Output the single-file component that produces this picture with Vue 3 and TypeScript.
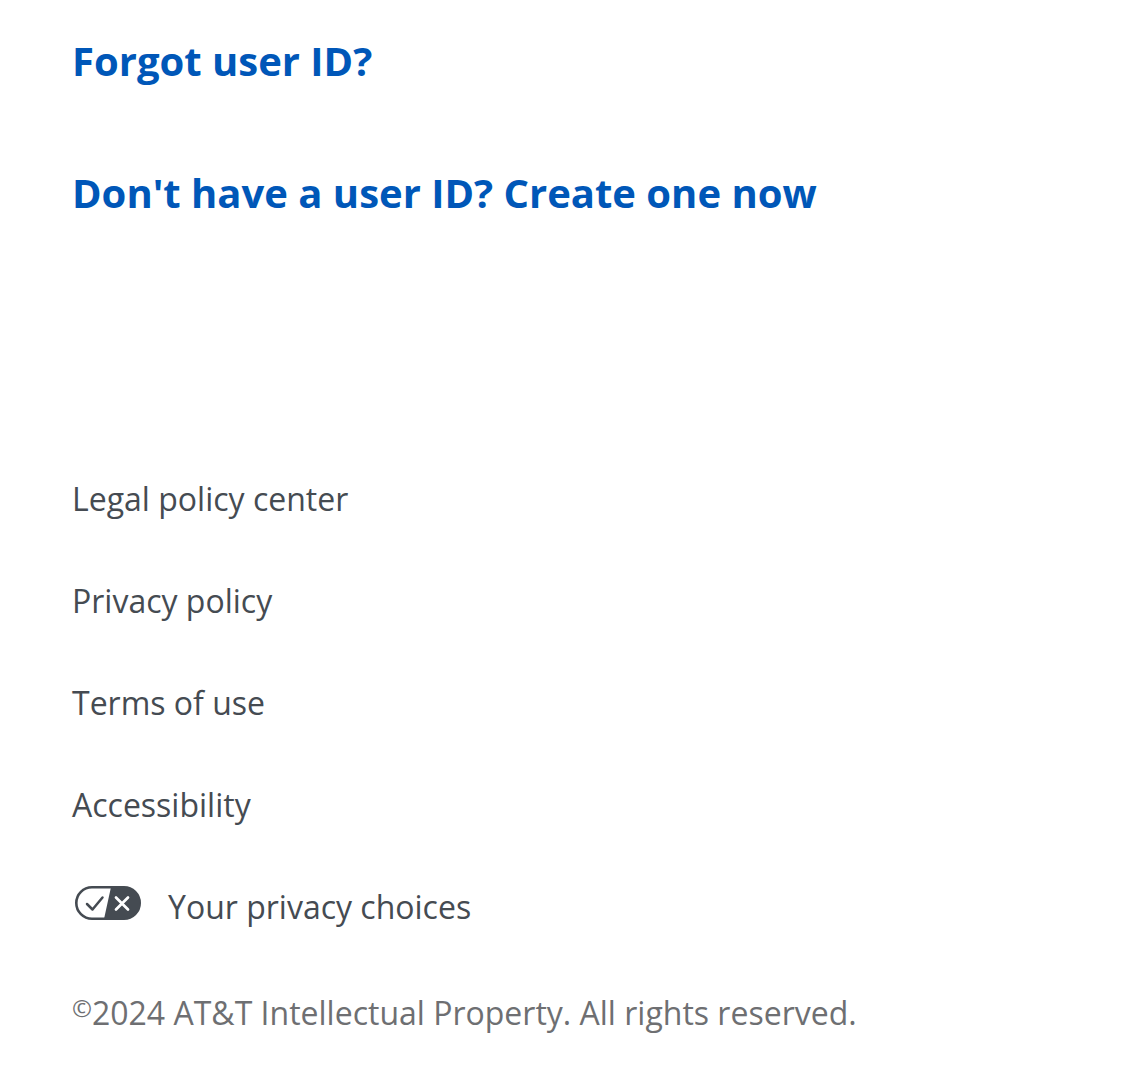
<script setup lang="ts">
interface FooterLink {
  label: string
  href: string
  icon?: boolean
}

const actions: FooterLink[] = [
  { label: 'Forgot user ID?', href: '#forgot' },
  { label: "Don't have a user ID? Create one now", href: '#create' },
]

const legal: FooterLink[] = [
  { label: 'Legal policy center', href: '#legal' },
  { label: 'Privacy policy', href: '#privacy' },
  { label: 'Terms of use', href: '#terms' },
  { label: 'Accessibility', href: '#accessibility' },
  { label: 'Your privacy choices', href: '#choices', icon: true },
]
</script>

<template>
  <div class="page">
    <main class="actions">
      <a v-for="item in actions" :key="item.href" :href="item.href">{{ item.label }}</a>
    </main>
    <footer class="footer">
      <nav class="legal" aria-label="Legal">
        <a v-for="item in legal" :key="item.href" :href="item.href">
          <svg v-if="item.icon" class="choices" viewBox="0 0 70 44" aria-hidden="true">
            <rect x="4.300" y="2.300" width="63.400" height="31.400" rx="15.700" fill="#fff" stroke="#454b52" stroke-width="2.600" />
            <path d="M39 2H52a16 16 0 0 1 0 32H32Z" fill="#454b52" />
            <path d="M15 19L20.500 24.500L30.500 12.500" fill="none" stroke="#454b52" stroke-width="2.500" stroke-linecap="round" stroke-linejoin="round" />
            <path d="M44 12.500L56 24.500M56 12.500L44 24.500" stroke="#fff" stroke-width="2.700" stroke-linecap="round" />
          </svg>
          {{ item.label }}
        </a>
      </nav>
      <p class="copyright"><span class="mark">©</span>2024 AT&amp;T Intellectual Property. All rights reserved.</p>
    </footer>
  </div>
</template>

<style>
body {
  background: #fff;
}
</style>

<style scoped>
.page {
  padding: 31px 72px 0;
  font-family: "Open Sans", "Noto Sans", sans-serif;
}
.actions {
  display: flex;
  flex-direction: column;
  align-items: flex-start;
  gap: 72px;
}
.actions a {
  color: #0057b8;
  font-size: 40px;
  font-weight: 700;
  line-height: 60px;
  text-decoration: none;
}
.footer {
  margin-top: 252px;
}
.legal {
  display: flex;
  flex-direction: column;
  align-items: flex-start;
  gap: 54px;
}
.legal a {
  display: flex;
  align-items: center;
  gap: 26px;
  color: #454b52;
  font-size: 32px;
  line-height: 48px;
  text-decoration: none;
}
.choices {
  width: 70px;
  height: 44px;
}
.copyright {
  margin: 58px 0 0;
  color: #6e6f72;
  font-size: 32px;
  line-height: 48px;
}
.mark {
  font-size: 24px;
  line-height: 24px;
  vertical-align: 8px;
}
</style>
